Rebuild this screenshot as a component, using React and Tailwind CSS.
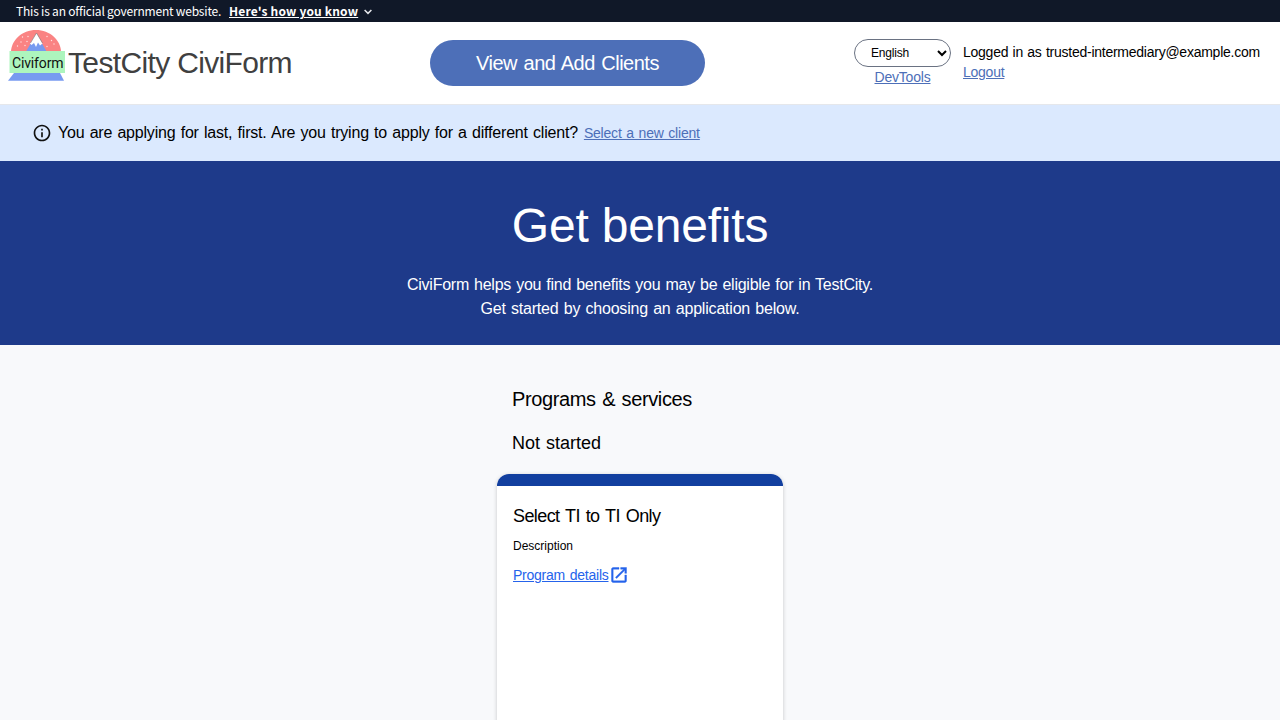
import React from "react";

function Logo() {
  return (
    <svg width="60" height="54" viewBox="0 0 60 54" className="block shrink-0" aria-label="Civiform logo">
      <path d="M3 22.500C3.500 11 14 1 28 1S52.500 11 53 22.500Z" fill="#fa8383" />
      <path d="M18 22.500L28.500 4.500L38.500 22.500Z" fill="#779af0" />
      <path d="M28.500 4L34.500 14.500L32 16.500L30 13.500L28 18L26 14L23.500 16L22 14.500Z" fill="#fff" />
      <path d="M22.500 14L28.500 4L34.500 14" fill="none" stroke="#777" strokeWidth="0.600" />
      <g fill="#ffe3e3">
        <circle cx="20" cy="7.500" r="0.700" /><circle cx="14.500" cy="8" r="0.700" />
        <circle cx="19" cy="12.500" r="0.700" /><circle cx="9.500" cy="17" r="0.700" />
        <circle cx="17" cy="16.500" r="0.700" /><circle cx="13" cy="13" r="0.700" />
        <circle cx="39" cy="7.500" r="0.700" /><circle cx="39" cy="17.500" r="0.700" />
        <circle cx="43.500" cy="11.500" r="0.700" /><circle cx="46" cy="15" r="0.700" />
      </g>
      <path d="M6 44H52L56 51.700H0Z" fill="#779af0" />
      <rect x="1.500" y="22" width="55.500" height="22" fill="#adf5bd" />
      <text x="4" y="38.500" fontSize="14" textLength="51.500" fill="#111" fontFamily="Roboto, sans-serif">Civiform</text>
    </svg>
  );
}

function GovBanner() {
  return (
    <div className="flex h-[22px] items-center bg-gray-900 pl-4 font-['Noto_Sans_CJK_SC','Noto_Sans',sans-serif] text-[12px] leading-[22px] text-white">
      <span className="w-[213px] whitespace-nowrap tracking-[-0.2px]">This is an official government website.</span>
      <span className="whitespace-nowrap font-bold tracking-[0.17px] underline">Here's how you know</span>
      <svg className="ml-[6px] mt-[2px]" width="8" height="6" viewBox="0 0 8 6" fill="none" stroke="#e5e7eb" strokeWidth="1.500">
        <path d="M0.600 1L4 4.400L7.400 1" />
      </svg>
    </div>
  );
}

function Header() {
  return (
    <header className="flex h-[83px] border-b border-gray-200 bg-white">
      <div className="flex w-[430px] shrink-0 pl-2 pt-[7px]">
        <Logo />
        <span className="pt-[14px] text-[30px] leading-10 tracking-[-0.65px] text-[#404040]">TestCity CiviForm</span>
      </div>
      <button className="mt-[18px] h-[46px] w-[275px] shrink-0 rounded-full bg-[#4d6fb8] text-[20px] leading-6 tracking-[-0.5px] [word-spacing:1.4px] text-white">
        View and Add Clients
      </button>
      <div className="ml-[149px] flex w-[97px] shrink-0 flex-col items-center pt-[17px]">
        <select className="h-7 w-[97px] rounded-full border border-gray-500 bg-white pl-3 text-[12px] tracking-[-0.2px] text-black">
          <option>English</option>
        </select>
        <a className="text-[14px] leading-5 tracking-[-0.2px] text-[#4d6fb8] underline">DevTools</a>
      </div>
      <div className="ml-3 flex flex-col items-start whitespace-nowrap pt-5 text-[14px] leading-5 tracking-[-0.25px] [word-spacing:0.7px]">
        <span>Logged in as trusted-intermediary@example.com</span>
        <a className="text-[#4d6fb8] underline">Logout</a>
      </div>
    </header>
  );
}

function ClientNotice() {
  return (
    <div className="flex h-14 items-center whitespace-nowrap bg-[#dbe9fe] pl-8 tracking-[-0.2px] [word-spacing:1px]">
      <svg width="20" height="20" viewBox="0 0 24 24" fill="#111">
        <path d="M11 7h2v2h-2zm0 4h2v6h-2zm1-9C6.480 2 2 6.480 2 12s4.480 10 10 10 10-4.480 10-10S17.520 2 12 2zm0 18c-4.410 0-8-3.590-8-8s3.590-8 8-8 8 3.590 8 8-3.590 8-8 8z" />
      </svg>
      <span className="ml-[6px] text-[16px]">You are applying for last, first. Are you trying to apply for a different client?</span>
      <a className="ml-[6px] text-[14px] text-[#4d6fb8] underline">Select a new client</a>
    </div>
  );
}

export default function App() {
  return (
    <div className="h-[720px] w-[1280px] overflow-hidden bg-[#f8f9fb] font-['Liberation_Sans',Arial,sans-serif] text-black">
      <GovBanner />
      <Header />
      <ClientNotice />
      <section className="h-[184px] bg-[#1e3a8a] pt-10 text-center text-white">
        <h1 className="text-[48px] leading-[50px] tracking-[-0.2px]">Get benefits</h1>
        <p className="mt-[22px] text-[16px] leading-6 tracking-[-0.25px] [word-spacing:0.9px]">CiviForm helps you find benefits you may be eligible for in TestCity.</p>
        <p className="text-[16px] leading-6 tracking-[-0.2px] [word-spacing:1px]">Get started by choosing an application below.</p>
      </section>
      <main className="mx-auto w-[286px] whitespace-nowrap">
        <h2 className="pl-[15px] pt-10 text-[20px] leading-7 tracking-[-0.38px] [word-spacing:1.3px]">Programs &amp; services</h2>
        <h3 className="mt-4 pl-[15px] text-[18px] leading-7 [word-spacing:1px]">Not started</h3>
        <article className="mt-[17px] h-[300px] overflow-hidden rounded-t-xl bg-white shadow-[0_1px_4px_rgba(0,0,0,0.2)]">
          <div className="h-3 bg-[#123f9f]" />
          <div className="px-4 pt-4">
            <h4 className="text-[18px] leading-7 tracking-[-0.6px] [word-spacing:1.5px]">Select TI to TI Only</h4>
            <p className="mt-2 text-[12px] leading-4">Description</p>
            <a className="mt-[11px] flex items-center text-[14px] leading-5 text-[#2563eb]">
              <span className="tracking-[-0.25px] [word-spacing:1.2px] underline">Program details</span>
              <svg width="20" height="20" viewBox="0 0 24 24" fill="currentColor" stroke="currentColor" strokeWidth="0.500">
                <path d="M19 19H5V5h7V3H5c-1.110 0-2 .9-2 2v14c0 1.100.89 2 2 2h14c1.100 0 2-.9 2-2v-7h-2v7zM14 3v2h3.590l-9.830 9.830 1.410 1.410L19 6.410V10h2V3h-7z" />
              </svg>
            </a>
          </div>
        </article>
      </main>
    </div>
  );
}
